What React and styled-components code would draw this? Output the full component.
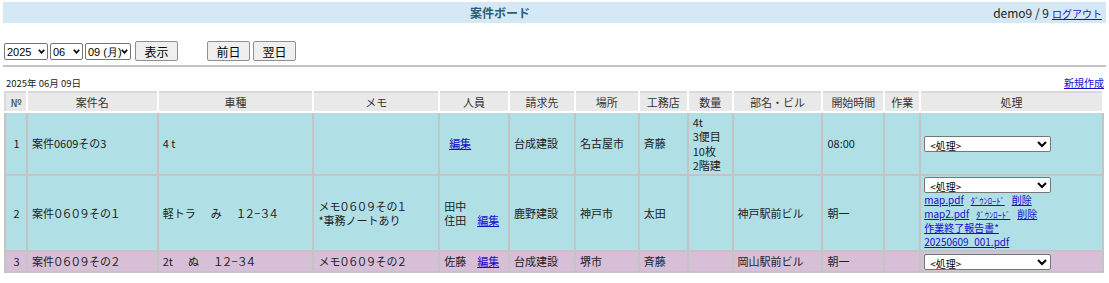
import styled, { createGlobalStyle } from "styled-components";

const GlobalStyle = createGlobalStyle`
  body {
    margin: 2px 3px;
    font-family: "Noto Sans CJK JP", "Noto Sans", sans-serif;
    font-size: 11px;
    color: #222;
    background: #fff;
  }
`;

// barra do topo
const Cabecalho = styled.div`
  display: flex;
  align-items: center;
  height: 21px;
  background-color: #d4e9f5;
  padding: 0 4px;
`;

const Titulo = styled.div`
  flex: 1;
  text-align: center;
  font-size: 12px;
  font-weight: bold;
  color: #2b5c78;
`;

const Usuario = styled.div`
  font-size: 12px;
  color: #222;
  a {
    font-size: 10px;
    margin-left: 3px;
  }
`;

const Link = styled.a`
  color: #1a0dcc;
  text-decoration: underline;
  cursor: pointer;
`;

// linha dos selects e botoes
const Controles = styled.form`
  display: flex;
  align-items: center;
  gap: 2px;
  margin: 18px 0 0 1px;
  height: 20px;
`;

// select com a setinha por cima
const CaixaOpcao = styled.span`
  position: relative;
  display: inline-block;
  height: 17px;
`;

const Opcao = styled.select`
  appearance: none;
  height: 17px;
  width: ${(p) => p.$largura};
  font-family: "Liberation Sans", Arial, sans-serif;
  font-size: 11px;
  border: 1px solid #767676;
  border-radius: 2px;
  padding: 0 0 0 2px;
  background: #fff;
  color: #000;
`;

const Seta = styled.svg`
  position: absolute;
  right: 3px;
  top: 6px;
  width: 7px;
  height: 5px;
  pointer-events: none;
`;

const Botao = styled.button`
  height: 20px;
  width: 43px;
  padding: 0;
  font-family: "Noto Sans CJK JP", sans-serif;
  font-size: 12px;
  border: 1px solid #8f8f8f;
  border-radius: 2px;
  background: #efefef;
  color: #000;
  margin-left: ${(p) => p.$margem || "0"};
`;

const Linha = styled.hr`
  border: none;
  border-top: 2px solid #c4c4c4;
  margin: 4px 0 0;
`;

const Info = styled.div`
  display: flex;
  justify-content: space-between;
  align-items: flex-end;
  margin: 8px 2px 1px 3px;
  span {
    font-size: 9.5px;
  }
  a {
    font-size: 10px;
  }
`;

const Tabela = styled.table`
  border-collapse: collapse;
  width: 1100px;
  margin-left: 1px;
  table-layout: fixed;
  border: 2px solid #d9d9d9;
`;

const Th = styled.th`
  height: 18px;
  background: #e9e9e9;
  font-weight: normal;
  color: #333;
  border-right: 2px solid #fff;
  border-bottom: 2px solid #fff;
  padding: 0;
  font-size: 11px;
  white-space: nowrap;
`;

const Linhas = styled.tr`
  background: ${(p) => (p.$tipo === "roxo" ? "#d8bfd8" : "#b0dfe5")};
  height: ${(p) => p.$altura}px;
`;

const Td = styled.td`
  border: 2px solid #c4c4c4;
  padding: 0 3px 0 4px;
  line-height: 14.5px;
  vertical-align: middle;
  text-align: ${(p) => (p.$centro ? "center" : "left")};
  white-space: nowrap;
  overflow: hidden;
`;

// numeros em largura cheia ficam mais estreitos
const Largo = styled.span`
  font-feature-settings: "palt";
  letter-spacing: 0.4px;
`;

// espaco japones um pouco mais largo
const Espaco = styled.span`
  letter-spacing: 4px;
`;

const CelulaProcesso = styled(Td)`
  line-height: 14px;
  padding: 1px 3px;
`;

const Processo = styled.select`
  display: block;
  width: 127px;
  height: 16px;
  font-family: "Noto Sans CJK JP", sans-serif;
  font-size: 10px;
  border: 1px solid #767676;
  border-radius: 2px;
  padding: 0 0 0 1px;
  background: #fff;
  color: #000;
`;

const Arquivo = styled.div`
  font-size: 10px;
  a + a {
    margin-left: 7px;
  }
`;

const Baixar = styled(Link)`
  font-size: 8.5px;
`;

const colunas = [
  ["№", 22],
  ["案件名", 131],
  ["車種", 156],
  ["メモ", 126],
  ["人員", 70],
  ["請求先", 66],
  ["場所", 64],
  ["工務店", 49],
  ["数量", 45],
  ["部名・ビル", 90],
  ["開始時間", 62],
  ["作業", 36],
  ["処理", 183],
];

function Texto({ children }) {
  return children.split(/([０-９−]+|　)/).map((parte, i) => {
    if (i % 2 === 0) return parte;
    return parte === "　" ? <Espaco key={i}>{parte}</Espaco> : <Largo key={i}>{parte}</Largo>;
  });
}

function Seletor({ largura, children }) {
  return (
    <CaixaOpcao>
      <Opcao $largura={largura}>{children}</Opcao>
      <Seta viewBox="0 0 7 5">
        <polyline points="0.8,0.8 3.5,3.8 6.2,0.8" fill="none" stroke="#000" strokeWidth="1.7" />
      </Seta>
    </CaixaOpcao>
  );
}

function SelectProcesso() {
  return (
    <Processo defaultValue="">
      <option value="">&lt;処理&gt;</option>
    </Processo>
  );
}

export default function App() {
  return (
    <>
      <GlobalStyle />
      <Cabecalho>
        <Titulo>案件ボード</Titulo>
        <Usuario>
          demo9 / 9<Link>ログアウト</Link>
        </Usuario>
      </Cabecalho>

      <Controles>
        <Seletor largura="44px">
          <option>2025</option>
        </Seletor>
        <Seletor largura="33px">
          <option>06</option>
        </Seletor>
        <Seletor largura="46px">
          <option>09 (月)</option>
        </Seletor>
        <Botao type="button" $margem="2px">表示</Botao>
        <Botao type="button" $margem="27px">前日</Botao>
        <Botao type="button" $margem="1px">翌日</Botao>
      </Controles>
      <Linha />

      <Info>
        <span>2025年 06月 09日</span>
        <Link>新規作成</Link>
      </Info>

      <Tabela>
        <colgroup>
          {colunas.map(([nome, w]) => (
            <col key={nome} style={{ width: `${(w / 1100) * 100}%` }} />
          ))}
        </colgroup>
        <thead>
          <tr>
            {colunas.map(([nome]) => (
              <Th key={nome}>{nome}</Th>
            ))}
          </tr>
        </thead>
        <tbody>
          <Linhas $altura={63}>
            <Td $centro>1</Td>
            <Td>案件0609その3</Td>
            <Td>4 t</Td>
            <Td></Td>
            <Td>
              &nbsp;&nbsp;<Link>編集</Link>
            </Td>
            <Td>台成建設</Td>
            <Td>名古屋市</Td>
            <Td>斉藤</Td>
            <Td>
              4t
              <br />
              3便目
              <br />
              10枚
              <br />
              2階建
            </Td>
            <Td></Td>
            <Td>08:00</Td>
            <Td></Td>
            <CelulaProcesso>
              <SelectProcesso />
            </CelulaProcesso>
          </Linhas>
          <Linhas $altura={74}>
            <Td $centro>2</Td>
            <Td>
              <Texto>案件０６０９その１</Texto>
            </Td>
            <Td>
              <Texto>軽トラ　み　１２−３４</Texto>
            </Td>
            <Td>
              <Texto>メモ０６０９その１</Texto>
              <br />
              *事務ノートあり
            </Td>
            <Td>
              田中
              <br />
              住田　<Link>編集</Link>
            </Td>
            <Td>鹿野建設</Td>
            <Td>神戸市</Td>
            <Td>太田</Td>
            <Td></Td>
            <Td>神戸駅前ビル</Td>
            <Td>朝一</Td>
            <Td></Td>
            <CelulaProcesso>
              <SelectProcesso />
              <Arquivo>
                <Link>map.pdf</Link>
                <Baixar>ﾀﾞｳﾝﾛｰﾄﾞ</Baixar>
                <Link>削除</Link>
              </Arquivo>
              <Arquivo>
                <Link>map2.pdf</Link>
                <Baixar>ﾀﾞｳﾝﾛｰﾄﾞ</Baixar>
                <Link>削除</Link>
              </Arquivo>
              <Arquivo>
                <Link>作業終了報告書*</Link>
              </Arquivo>
              <Arquivo>
                <Link>20250609_001.pdf</Link>
              </Arquivo>
            </CelulaProcesso>
          </Linhas>
          <Linhas $tipo="roxo" $altura={21}>
            <Td $centro>3</Td>
            <Td>
              <Texto>案件０６０９その２</Texto>
            </Td>
            <Td>
              <Texto>2t　ぬ　１２−３４</Texto>
            </Td>
            <Td>
              <Texto>メモ０６０９その２</Texto>
            </Td>
            <Td>
              佐藤　<Link>編集</Link>
            </Td>
            <Td>台成建設</Td>
            <Td>堺市</Td>
            <Td>斉藤</Td>
            <Td></Td>
            <Td>岡山駅前ビル</Td>
            <Td>朝一</Td>
            <Td></Td>
            <CelulaProcesso>
              <SelectProcesso />
            </CelulaProcesso>
          </Linhas>
        </tbody>
      </Tabela>
    </>
  );
}
